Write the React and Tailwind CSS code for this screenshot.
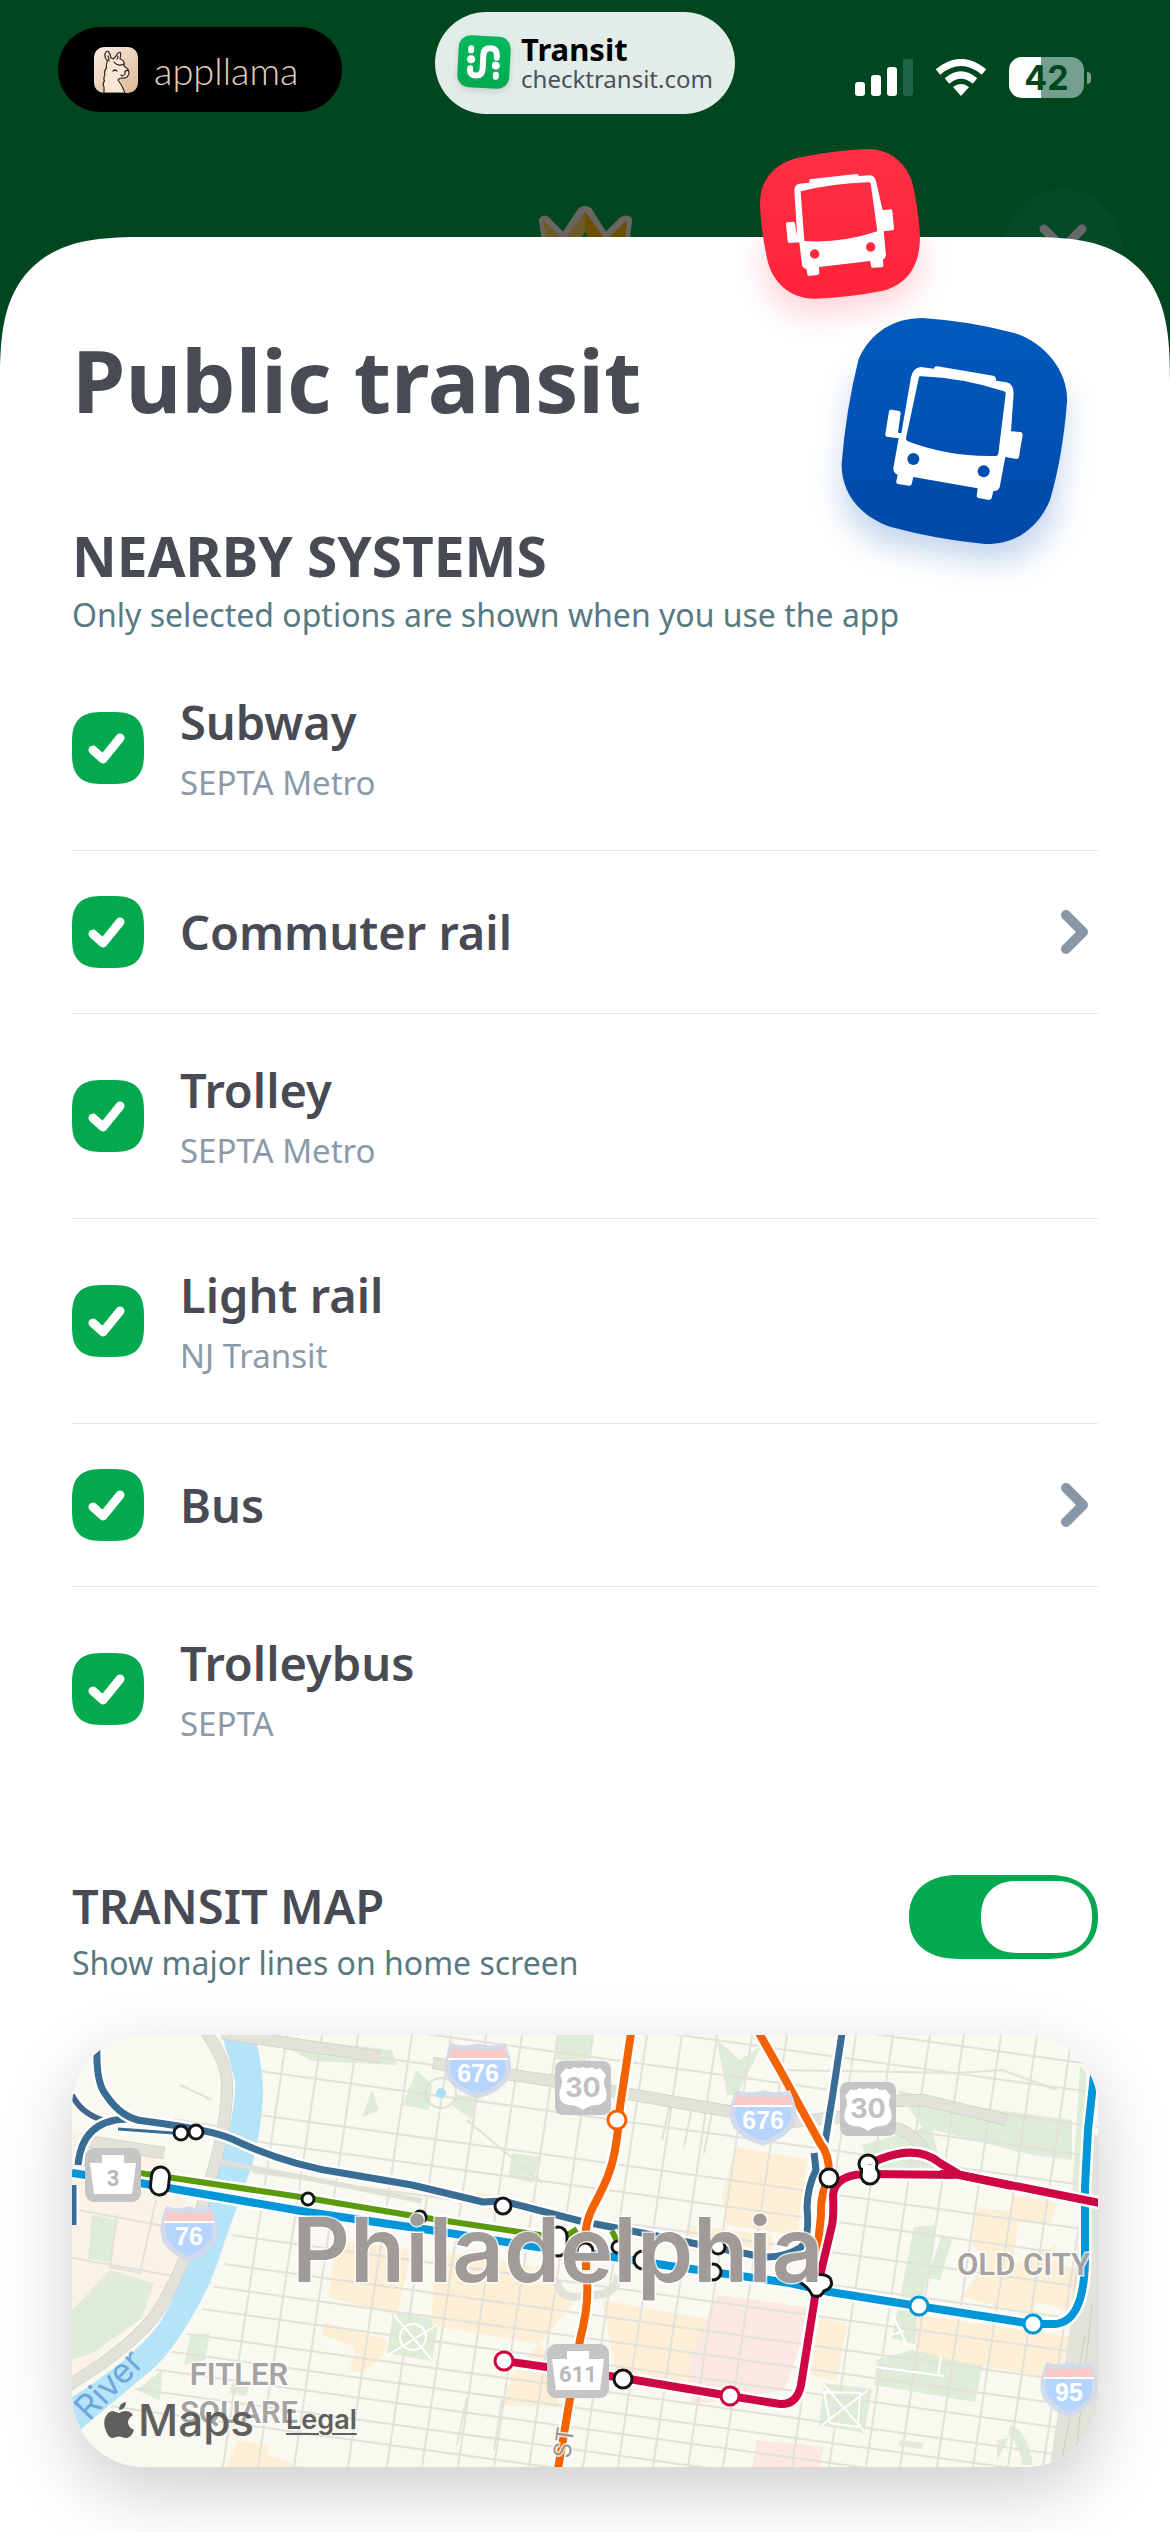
import React, { useState } from 'react';
import { clsx } from 'clsx';

const systems = [
  { id: 'subway', name: 'Subway', agency: 'SEPTA Metro' },
  { id: 'commuter', name: 'Commuter rail', more: true },
  { id: 'trolley', name: 'Trolley', agency: 'SEPTA Metro' },
  { id: 'light', name: 'Light rail', agency: 'NJ Transit' },
  { id: 'bus', name: 'Bus', more: true },
  { id: 'trolleybus', name: 'Trolleybus', agency: 'SEPTA' },
];

const LlamaLogo = () => (
  <svg viewBox="0 0 44 46" className="w-11 h-[46px]" aria-hidden="true">
    <defs>
      <linearGradient id="llama" x1="0" y1="0" x2="1" y2="1">
        <stop offset="0" stopColor="#fdeee0" />
        <stop offset="1" stopColor="#dcb898" />
      </linearGradient>
    </defs>
    <rect width="44" height="46" rx="10" fill="url(#llama)" />
    <path
      d="M10 46 V40 Q8 37 10.500 34 Q9 31 11 28 Q9.500 24 12.500 21 Q12 17 13.500 14 Q9 9 12 5 Q15 2 17 11 L19 12 Q22 10 24 6 Q28 3 26 12 Q31 13 30 19 Q35 22 35 26 Q34 32 28 31 Q25 31 24 33 Q28 38 31 46 Z"
      fill="#fbe6d3"
      stroke="#2b2623"
      strokeWidth="1.200"
      strokeLinejoin="round"
    />
    <path d="M20 15 Q24 20 30 17 M19 24 q2 -2 4 0 M31 24 q2 0 3 -1 M31 24 v3 q-2 3 -4 1 M14 9 q1 2 1 5 M24 9 q0 2 -1 3" fill="none" stroke="#2b2623" strokeWidth="1.200" strokeLinecap="round" />
  </svg>
);

const TransitLogo = () => (
  <svg viewBox="0 0 54 56" className="w-[54px] h-14 overflow-visible drop-shadow-md" aria-hidden="true">
    <defs>
      <linearGradient id="tlogo" x1="0" y1="0" x2="0" y2="1">
        <stop offset="0" stopColor="#05b85e" />
        <stop offset="1" stopColor="#02a94f" />
      </linearGradient>
    </defs>
    <g transform="rotate(3 27 27)">
      <rect x="1" y="1" width="52" height="52" rx="12" fill="url(#tlogo)" />
      <g fill="none" stroke="#fff" strokeWidth="6" strokeLinecap="round">
        <path d="M13.500 34 V36 Q14 41 19.500 41 Q26 41 26 34 V20 Q26 13 33 13 Q39.500 13 39.500 20 V22" />
        <path d="M13.500 14 V16 M39.500 39 V41" />
      </g>
      <circle cx="14" cy="25" r="4" fill="#fff" />
      <circle cx="39" cy="30" r="4" fill="#fff" />
    </g>
  </svg>
);

const StatusIcons = () => (
  <div className="flex items-center gap-[22px] justify-self-end mt-[57px] mr-[79px]">
    <svg viewBox="0 0 58 38" className="w-[58px] h-[38px]" aria-hidden="true">
      <g fill="#fff">
        <rect x="0" y="23" width="10" height="14" rx="3" />
        <rect x="16" y="16" width="10" height="21" rx="3" />
        <rect x="32" y="8" width="10" height="29" rx="3" />
      </g>
      <rect x="48" y="0" width="10" height="37" rx="3" fill="#1f6648" />
    </svg>
    <svg viewBox="0 0 52 38" className="w-[52px] h-[38px]" aria-hidden="true">
      <g fill="none" stroke="#fff" strokeWidth="7">
        <path d="M3 13 Q26 -6 49 13" />
        <path d="M12 22 Q26 10 40 22" />
      </g>
      <path d="M18 28 Q26 22 34 28 L26 37 Z" fill="#fff" />
    </svg>
    <div className="flex items-center gap-[3px]">
      <div className="flex items-center justify-center w-[75px] h-[41px] rounded-[13px] bg-linear-to-r from-white from-43% to-[#73a08e] to-43% text-[#00461f] text-[34px] leading-none font-bold font-['Inter',sans-serif]">
        42
      </div>
      <div className="w-1 h-3 rounded-r-full bg-[#73a08e]" />
    </div>
  </div>
);

const BusBadges = () => (
  <svg viewBox="0 0 1410 1350" className="absolute right-0 -top-[107px] w-[470px] h-[450px] overflow-visible pointer-events-none" aria-hidden="true">
    <defs>
      <linearGradient id="redBadge" x1="0" y1="0" x2="0" y2="1">
        <stop offset="0" stopColor="#ff2f46" />
        <stop offset="1" stopColor="#ff2439" />
      </linearGradient>
      <linearGradient id="blueBadge" x1="0" y1="0" x2="0" y2="1">
        <stop offset="0" stopColor="#005bbd" />
        <stop offset="1" stopColor="#0048a8" />
      </linearGradient>
      <filter id="soft" x="-50%" y="-50%" width="200%" height="200%">
        <feGaussianBlur stdDeviation="50" />
      </filter>
    </defs>

    <path d="M190 340 L640 320 L665 400 Q640 520 500 530 L340 550 Q210 540 200 420 Z" fill="#ff2f46" opacity="0.22" filter="url(#soft)" />
    <path d="M470 740 L1100 800 L1060 1170 Q1000 1300 850 1290 L560 1240 Q420 1190 430 1050 Z" fill="#0050b4" opacity="0.25" filter="url(#soft)" />

    <path
      d="M310 80 Q410 61 500 57 C585 57 628 115 640 170 Q656 245 660 320 C660 420 610 468 545 483 Q445 503 345 506 C265 506 212 450 200 380 Q181 290 180 215 C182 140 235 92 310 80 Z"
      fill="url(#redBadge)"
    />
    <path
      d="M328 151 Q329 147 334 147 L470 132 Q476 132 477 138 L510 136 Q524 137 528 154 L548 241 L572 238 Q576 238 577 243 L582 295 Q582 301 577 301 L551 304 L558 375 Q556 387 549 388 L550 408 Q549 412 544 412 L518 413 Q513 413 513 409 L511 393 L357 411 L358 430 Q357 435 352 435 L326 438 Q322 437 322 433 L319 416 Q308 415 306 404 L298 337 L268 339 Q264 339 263 334 L258 281 Q258 277 262 277 L279 275 Q284 275 285 280 L292 322 L283 182 Q283 164 298 161 L328 158 Z M302 186 L313 333 Q425 340 532 304 L512 160 Q510 156 505 157 Q400 160 302 184 Z"
      fill="#fff"
      fillRule="evenodd"
    />
    <circle cx="344" cy="372" r="14" fill="#ff2a3f" />
    <circle cx="512" cy="351" r="14" fill="#ff2a3f" />

    <path
      d="M667 564 Q800 572 940 608 C1035 636 1105 725 1101 815 Q1088 980 1050 1110 C1010 1205 935 1244 855 1242 Q710 1228 570 1190 C470 1155 423 1080 425 1000 Q438 840 475 690 C510 605 585 564 667 564 Z"
      fill="url(#blueBadge)"
    />
    <path
      d="M701 716 Q703 708 712 709 L880 737 Q887 739 888 746 L888 752 L920 757 Q940 762 941 790 L933 904 L962 906 Q968 908 968 914 L957 981 Q955 988 949 987 L916 981 L899 1072 Q895 1084 880 1083 L875 1104 Q873 1110 867 1110 L835 1104 Q829 1102 830 1097 L833 1075 L640 1041 L635 1062 Q633 1068 627 1067 L594 1062 Q588 1060 589 1054 L593 1034 Q580 1030 580 1015 L596 925 L560 920 Q555 918 556 912 L567 844 Q569 838 575 839 L597 843 Q602 844 602 850 L594 908 L604 910 L633 742 Q638 714 662 711 Z M657 741 L618 925 Q617 930 623 934 Q750 982 888 978 Q894 977 895 971 L917 792 Q918 787 912 784 Q790 744 664 739 Q658 738 657 741 Z"
      fill="#fff"
      fillRule="evenodd"
    />
    <circle cx="640" cy="987" r="18" fill="#004fb0" />
    <circle cx="851" cy="1024" r="18" fill="#004fb0" />
  </svg>
);

const SystemRow = ({ system, checked, onToggle, last }) => (
  <li className={clsx('flex items-center justify-between py-[45px]', !last && 'border-b border-[#e3e7ea]')}>
    <label className="flex items-center gap-9">
      <span className="relative flex w-18 h-18">
        <input
          type="checkbox"
          checked={checked}
          onChange={onToggle}
          className="appearance-none w-18 h-18 rounded-[24px] supports-[corner-shape:squircle]:rounded-[32px] [corner-shape:superellipse(1.5)] bg-[#d5dde2] checked:bg-[#02a94f]"
        />
        {checked && (
          <svg viewBox="0 0 72 72" className="absolute inset-0 pointer-events-none" aria-hidden="true">
            <path d="M21 38 L31 47 L48 26" fill="none" stroke="#fff" strokeWidth="9" strokeLinecap="round" strokeLinejoin="round" />
          </svg>
        )}
      </span>
      <span className="flex flex-col gap-2">
        <span className="text-[47px] leading-[62px] font-semibold text-[#484b54]">{system.name}</span>
        {system.agency && <span className="text-[33px] leading-[44px] text-[#8a9aa9]">{system.agency}</span>}
      </span>
    </label>
    {system.more && (
      <button type="button" aria-label={`${system.name} options`} className="mr-2">
        <svg viewBox="0 0 32 48" className="w-8 h-12" aria-hidden="true">
          <path d="M8 7 L25 24 L8 41" fill="none" stroke="#8797a8" strokeWidth="10" strokeLinecap="round" strokeLinejoin="round" />
        </svg>
      </button>
    )}
  </li>
);

// Street grid: avenues are given by x at the top edge, cross streets by y at the left edge
const avenues = [215, 250, 286, 340, 379, 414, 450, 486, 521, 575, 610, 645, 680, 715, 784, 821, 858, 892, 929, 965, 1000, 1035];
const crossStreets = [-112, -84, -50, -20, 10, 54, 81, 112, 145, 178, 208, 232, 256, 283, 303, 323, 345, 366];

const Interstate = ({ x, y, w = 52, label }) => (
  <g transform={`translate(${x} ${y})`}>
    <path
      d={`M${-w / 2 + 5} -25 Q${-w / 4} -21 0 -25 Q${w / 4} -21 ${w / 2 - 5} -25 Q${w / 2 + 4} -5 ${w / 2 - 3} 8 Q${w / 2 - 12} 20 0 25 Q${-w / 2 + 12} 20 ${-w / 2 + 3} 8 Q${-w / 2 - 4} -5 ${-w / 2 + 5} -25 Z`}
      fill="#b5d5ff"
      stroke="#d3daea"
      strokeWidth="5"
    />
    <path d={`M${-w / 2 + 5} -23 Q${-w / 4} -19 0 -22 Q${w / 4} -19 ${w / 2 - 5} -23 L${w / 2 - 1} -13 H${-w / 2 + 1} Z`} fill="#fac9c8" />
    <path d={`M${-w / 2 + 1} -12 H${w / 2 - 1}`} stroke="#fff" strokeWidth="2" />
    <text y="11" textAnchor="middle" fill="#fff" className="text-[25px] font-bold font-['Liberation_Sans',sans-serif]">{label}</text>
  </g>
);

const UsRoute = ({ x, y, label }) => (
  <g transform={`translate(${x} ${y})`}>
    <rect width="56" height="54" rx="8" fill="#c5c5c5" />
    <path d="M11 7 Q15 10 19 6 Q24 8 28 6 Q32 8 37 6 Q41 10 45 7 L51 14 Q47 20 51 29 Q54 41 43 44 Q34 44 28 49 Q22 44 13 44 Q2 41 5 29 Q9 20 5 14 Z" fill="#fff" />
    <text x="28" y="36" textAnchor="middle" fill="#c0c0c0" className="text-[27px] font-bold font-['Inter',sans-serif]">{label}</text>
  </g>
);

const Keystone = ({ x, y, w = 56, label }) => (
  <g transform={`translate(${x} ${y})`}>
    <rect width={w} height="54" rx="9" fill="#c5c5c5" />
    <path d={`M${w / 2 - 11} 7 H${w / 2 + 11} V15 H${w - 5} L${w - 9} 46 H9 L5 15 H${w / 2 - 11} Z`} fill="#fff" />
    <text x={w / 2} y="38" textAnchor="middle" fill="#b8b8b8" className="text-[22px] font-bold font-['Roboto',sans-serif]">{label}</text>
  </g>
);

const Line = ({ d, color, width = 7 }) => (
  <g fill="none" strokeLinecap="butt" strokeLinejoin="round">
    <path d={d} stroke="#fff" strokeWidth={width + 5} />
    <path d={d} stroke={color} strokeWidth={width} />
  </g>
);

const Stop = ({ x, y, r = 8, color = '#151515' }) => (
  <circle cx={x} cy={y} r={r} fill="#fff" stroke={color} strokeWidth="3" />
);

const TransitMap = () => (
  <svg viewBox="0 0 1026 432" preserveAspectRatio="xMidYMid slice" className="block w-full h-[432px]" role="img" aria-label="Map of Philadelphia transit lines">
    <defs>
      <clipPath id="eastBank">
        <path d="M192 0 H1026 V432 H0 V400 L75 345 L122 290 L150 235 L185 120 Z" />
      </clipPath>
    </defs>
    <rect width="1026" height="432" fill="#f9f8f1" />

    {/* land use */}
    <path d="M0 95 L70 110 L115 150 L110 225 L85 270 L40 310 L0 345 Z" fill="#fbf2e6" />
    <g fill="#dfecd8">
      <path d="M20 180 L46 185 L38 227 L16 224 Z M38 235 L82 248 L70 283 L20 318 L0 325 V275 Z" />
      <path d="M190 0 L320 15 L325 30 L240 26 Z M345 35 L360 50 L357 75 L330 70 Z M300 55 L307 75 L290 82 Z" />
      <path d="M485 0 H521 L514 30 L484 24 Z M440 118 L468 122 L461 148 L436 142 Z M385 60 L405 62 L400 85 L380 70 Z" />
      <path d="M645 5 L668 25 L690 10 L665 60 L655 60 Z M825 55 L890 70 L1000 85 L1000 125 L960 120 L850 92 Z M790 110 L860 90 L870 140 L800 140 Z" />
      <path d="M842 192 L864 190 L843 309 L820 303 Z M870 200 L880 205 L868 245 L855 243 Z M1008 30 L1015 40 L1008 160 L1000 160 Z" />
      <path d="M840 315 L911 328 L903 367 L802 350 L805 325 Z M752 348 L800 354 L792 398 L747 390 Z M828 405 L852 408 L850 414 L827 411 Z" />
      <path d="M938 390 Q955 395 961 430 H950 Q948 410 936 400 Z M719 420 L735 418 L732 430 L718 428 Z M925 405 L937 403 L925 425 Z" />
      <path d="M321 277 L367 285 L360 326 L315 318 Z M118 300 L138 298 L133 325 L112 330 Z M65 355 L90 335 L88 366 Z M160 348 L177 352 L174 361 L157 358 Z" />
    </g>
    <g fill="#fdefd6">
      <path d="M265 205 L340 215 L325 280 L256 262 Z M252 287 L315 305 L312 320 L290 338 L278 336 L283 312 L250 300 Z" />
      <path d="M362 215 L480 235 L500 270 L440 340 L430 370 L488 372 L470 310 L360 290 Z M404 157 L427 160 L422 175 L402 172 Z" />
      <path d="M530 265 L640 285 L620 355 L545 343 Z M664 112 L735 124 L725 200 L655 190 L650 160 Z M615 190 L700 200 V225 L610 215 Z" />
      <path d="M165 405 L196 410 L195 420 L230 432 H155 Z M905 172 L948 178 L940 230 L985 210 L960 280 L890 262 L915 225 L900 210 Z" />
      <path d="M940 160 L985 168 L978 190 L935 185 Z M748 283 L775 288 L765 345 L738 340 Z M845 280 L1000 302 L985 345 L880 325 L843 315 Z M958 215 L1005 235 L1000 275 L955 265 Z" />
    </g>
    <path d="M645 260 L735 272 L725 320 L712 355 L620 370 L618 320 Z M685 405 L752 412 L747 432 H680 Z" fill="#fbe8e2" />

    {/* streets */}
    <g clipPath="url(#eastBank)" stroke="#e2e1da" strokeWidth="2">
      {avenues.map((x) => (
        <path key={x} d={`M${x} 0 L${x - 64} 432`} />
      ))}
      {crossStreets.map((y) => (
        <path key={y} d={`M0 ${y} L1026 ${y + 142}`} />
      ))}
    </g>
    <g fill="none" stroke="#e2e1da" strokeWidth="2">
      <path d="M0 174 L130 198 M0 223 L140 248 M84 165 L68 238 L38 232 L45 180 M102 84 L150 92 M108 50 L140 65" />
      <path d="M395 85 L470 148 M708 35 L885 38 L930 35 L985 55 M600 60 L590 105 M620 72 L612 112 M640 78 L632 118 M395 362 L385 410 M430 365 L422 415" />
    </g>

    {/* river and highways */}
    <path
      d="M150 0 H183 Q192 40 191 62 Q188 110 175 145 L153 205 Q140 250 118 285 Q95 325 71 342 L8 395 Q0 380 0 362 Q60 325 88 288 Q110 250 118 210 L135 165 L155 105 Q165 60 163 45 Z"
      fill="#b5e4f8"
    />
    <g fill="none" stroke="#c9c9bd" strokeWidth="12">
      <path d="M134 -3 Q154 25 155 48 Q156 95 131 168 Q115 230 85 278 Q60 312 -3 350" />
      <path d="M150 -2 L308 22 M361 28 L481 46 L661 77 M708 88 L768 82 L821 66 L851 65 L935 85 M821 92 Q850 100 857 130 M14 106 L92 118" />
    </g>
    <g fill="none" stroke="#e2e1da" strokeWidth="11">
      <path d="M134 -3 Q154 25 155 48 Q156 95 131 168 Q115 230 85 278 Q60 312 -3 350" />
      <path d="M150 -2 L308 22 M361 28 L481 46 L661 77 M708 88 L768 82 L821 66 L851 65 L935 85 M821 92 Q850 100 857 130 M14 106 L92 118" />
    </g>
    <path d="M1016 100 H1026 V432 H978 L998 292 Z" fill="#e2e1da" />
    <path d="M1013 300 L990 425 M1020 270 L1004 420" stroke="#cecdc2" strokeWidth="1" />
    <path d="M148 127 L230 142 L350 166" fill="none" stroke="#e0dfd8" strokeWidth="5" />

    {/* paths in the squares */}
    <g fill="none" stroke="#fff" strokeWidth="2">
      <path d="M322 280 L360 325 M365 290 L316 320" />
      <circle cx="341" cy="302" r="13" />
      <path d="M752 357 L788 358 L786 392 L758 388 Z M752 350 L792 396 M796 355 L750 390 M804 332 L872 341 M869 322 L866 340 M822 283 L836 312 M820 300 L832 296" />
    </g>
    <path d="M484 245 Q490 268 514 260 Q545 262 546 240" fill="none" stroke="#e2e1da" strokeWidth="8" />
    <circle cx="369" cy="58" r="15" fill="none" stroke="#e0dfd8" strokeWidth="2" />
    <circle cx="369" cy="58" r="5" fill="#a9dff7" />

    {/* lines */}
    <Line color="#3a6d93" d="M46 94 L101 98" width={3} />
    <Line color="#43658e" d="M0 60 Q10 80 34 86" width={6} />
    <Line color="#3a6d93" d="M2 150 V190" width={5} />
    <Line color="#3a6d93" d="M6 130 Q10 85 55 84" />
    <Line color="#3a6d93" d="M25 14 Q24 48 34 60 Q50 84 72 86 Q140 95 160 104 Q215 130 270 138 L340 150 L411 167 L431 166 L508 186 L565 197 L625 209 L681 220 Q705 226 728 213 Q738 205 735 172 Q736 150 744 135 L742 118" />
    <Line color="#3a6d93" d="M770 -2 L761 58 L753 108" />
    <Line color="#5a9a0c" d="M13 128 L68 138 L235 163 L348 182 L468 200 L491 203 L505 194 M540 196 L546 208" width={6} />
    <Line color="#0096d8" d="M0 138 L68 148 L235 177 L358 195 L465 212 L535 221 L598 231 L718 248 L758 257 L846 271 L961 289 H980 Q1012 290 1013 225 V152 L1016 95 L1022 40" width={8} />
    <Line color="#f46200" d="M559 -2 L548 72 Q545 115 538 135 Q534 148 521 172 Q512 190 514 205 V235" width={8} />
    <Line color="#f46200" d="M515 246 Q517 270 508 305 L486 434" width={8} />
    <Line color="#f46200" d="M687 -2 L708 35 L748 108 Q758 120 757 142 Q748 160 749 180 L742 250" width={8} />
    <Line color="#ce0642" d="M432 326 L551 343 L658 361 L708 369 Q725 370 729 350 L743 262 L760 190 Q762 180 761 160 Q763 139 796 139 L888 140 L1028 168" width={8} />
    <Line color="#ce0642" d="M790 133 Q840 105 868 128 L888 140" width={8} />
    <path d="M868 139 L888 140 L940 151" fill="none" stroke="#ce0642" strokeWidth="8" />

    <Stop x={109} y={98} r={7} />
    <Stop x={124} y={97} r={7} />
    <Stop x={236} y={164} r={6} />
    <Stop x={348} y={182} r={6} />
    <Stop x={431} y={171} />
    <rect x="79" y="132" width="18" height="28" rx="9" fill="#fff" stroke="#151515" strokeWidth="3" transform="rotate(6 88 146)" />
    <rect x="477" y="192" width="18" height="29" rx="9" fill="#fff" stroke="#151515" strokeWidth="3" />
    <Stop x={513} y={216} r={8} />
    <Stop x={546} y={212} r={6} />
    <Stop x={571} y={225} r={9} />
    <Stop x={646} y={212} r={7} />
    <Stop x={641} y={237} />
    <Stop x={757} y={143} r={9} />
    <Stop x={796} y={129} r={9} />
    <Stop x={798} y={140} r={9} />
    <rect x="791" y="130" width="12" height="8" fill="#fff" />
    <path d="M729 248 Q727 240 738 241 Q752 237 758 243 Q763 252 752 256 Q748 264 740 260 Q737 253 729 248 Z" fill="#fff" stroke="#151515" strokeWidth="3" />
    <Stop x={551} y={344} r={9} />
    <Stop x={545} y={85} r={9} color="#f46200" />
    <Stop x={432} y={326} r={9} color="#ce0642" />
    <Stop x={658} y={361} r={9} color="#ce0642" />
    <Stop x={847} y={271} r={9} color="#0096d8" />
    <Stop x={961} y={289} r={9} color="#0096d8" />

    <Interstate x={117} y={199} label="76" />
    <Interstate x={406} y={36} w={61} label="676" />
    <Interstate x={691} y={83} w={61} label="676" />
    <Interstate x={997} y={355} label="95" />
    <UsRoute x={483} y={26} label="30" />
    <UsRoute x={768} y={47} label="30" />
    <Keystone x={13} y={113} label="3" />
    <Keystone x={475} y={309} w={62} label="611" />

    {/* place names */}
    <g fill="#a6a4a0" stroke="#ffffff" strokeOpacity="0.800" strokeWidth="3" style={{ paintOrder: 'stroke' }}>
      <text x="220" y="247" fill="#a09b96" className="text-[90px] font-semibold font-['Inter',sans-serif]">Philadelphia</text>
      <g className="text-[31px] font-semibold font-['Roboto',sans-serif]">
        <text x="885" y="240">OLD CITY</text>
        <text x="167" y="350" textAnchor="middle">FITLER</text>
        <text x="167" y="388" textAnchor="middle">SQUARE</text>
      </g>
      <text transform="translate(498 424) rotate(-82)" fill="#98958f" className="text-[24px] font-['Inter',sans-serif]">ST</text>
    </g>
    <text transform="translate(17 387) rotate(-46)" fill="#6fa6dc" className="text-[34px] font-['Inter',sans-serif]">River</text>
  </svg>
);

const App = () => {
  const [selected, setSelected] = useState(() => new Set(systems.map((s) => s.id)));
  const [showMap, setShowMap] = useState(true);

  const toggle = (id) => {
    const next = new Set(selected);
    if (next.has(id)) next.delete(id);
    else next.add(id);
    setSelected(next);
  };

  return (
    <div className="relative min-h-screen flex flex-col bg-[#00461f] font-['Noto_Sans',sans-serif] overflow-hidden">
      {/* Dimmed screen behind the sheet */}
      <button type="button" aria-label="Close" className="absolute right-12 top-[189px] w-[118px] h-[118px] rounded-full bg-[#024a28] flex items-start justify-center pt-[35px]">
        <svg viewBox="0 0 48 48" className="w-12 h-12" aria-hidden="true">
          <path d="M5 5 L43 43 M43 5 L5 43" stroke="#686868" strokeWidth="9" strokeLinecap="round" />
        </svg>
      </button>
      <svg viewBox="0 0 92 60" className="absolute left-1/2 -translate-x-1/2 top-[204px] w-[102px] h-[66px]" aria-hidden="true">
        <path d="M4 14 Q8 8 13 12 L26 25 L40 4 Q46 -1 52 4 L65 25 L78 12 Q86 8 89 14 L84 56 H10 Z" fill="#6b6561" />
        <path d="M8 15 L27 33 L46 7 V56 H14 Z" fill="#6d5a2b" />
        <path d="M46 7 L65 33 L84 15 L80 56 H46 Z" fill="#6b4f02" />
        <path d="M42 32 L46 25 L50 32 Z" fill="#06512a" />
      </svg>

      <header className="grid grid-cols-[1fr_auto_1fr] items-start h-[237px]">
        <div className="flex items-center gap-4 w-[284px] h-[85px] mt-[27px] ml-[58px] pl-9 rounded-[42px] bg-black">
          <LlamaLogo />
          <span className="text-[38px] leading-10 font-light text-[#e3cfbd] font-['Lato',sans-serif]">appllama</span>
        </div>
        <div className="flex items-center gap-2.5 h-[102px] mt-3 pl-[22px] pr-[22px] rounded-[51px] bg-[#e2ece8]">
          <TransitLogo />
          <div className="flex flex-col">
            <span className="text-[31px] leading-8 font-bold text-black">Transit</span>
            <span className="text-[24px] leading-7 text-[#4d5059]">checktransit.com</span>
          </div>
        </div>
        <StatusIcons />
      </header>

      <main className="relative flex-1 px-18 pt-[95px] pb-15 rounded-t-[112px] supports-[corner-shape:squircle]:rounded-t-[144px] [corner-shape:superellipse(1.5)] bg-white">
        <BusBadges />

        <h1 className="text-[86px] leading-[96px] font-bold text-[#484b54]">Public transit</h1>

        <section>
          <h2 className="mt-24 text-[55px] leading-[64px] font-bold text-[#484b54]">NEARBY SYSTEMS</h2>
          <p className="mt-1 text-[32px] leading-[46px] text-[#577a82]">Only selected options are shown when you use the app</p>
          <ul className="mt-2">
            {systems.map((system, idx) => (
              <SystemRow
                key={system.id}
                system={system}
                checked={selected.has(system.id)}
                onToggle={() => toggle(system.id)}
                last={idx === systems.length - 1}
              />
            ))}
          </ul>
        </section>

        <section>
          <label className="flex items-start justify-between mt-[84px]">
            <span className="flex flex-col gap-1">
              <span className="text-[47px] leading-[62px] font-semibold text-[#484b54]">TRANSIT MAP</span>
              <span className="text-[32px] leading-[44px] text-[#577a82]">Show major lines on home screen</span>
            </span>
            <input
              type="checkbox"
              role="switch"
              checked={showMap}
              onChange={() => setShowMap(!showMap)}
              className="appearance-none flex items-center w-[189px] h-21 px-1.5 rounded-[42px] supports-[corner-shape:squircle]:rounded-[50px/42px] [corner-shape:superellipse(1.2)] bg-[#c9d1d6] checked:bg-[#02a94f] checked:justify-end before:content-[''] before:w-[111px] before:h-18 before:rounded-[36px] before:[corner-shape:superellipse(1.2)] before:bg-white"
            />
          </label>

          <div className="relative mt-[50px] rounded-[72px] overflow-hidden shadow-[0_24px_72px_rgba(0,0,0,0.2)]">
            <TransitMap />
            <div className="absolute left-8 bottom-5 flex items-center text-[#5f5f5d] font-['Inter',sans-serif]">
              <svg viewBox="0 0 30 36" className="w-[30px] h-9" aria-hidden="true">
                <path
                  d="M15 11 Q18 9 22 9 Q26 9 29 13 Q24 16 24 21 Q25 26 30 28 Q27 36 22 36 Q20 36 18 35 Q15 34 12 35 Q10 36 8 36 Q4 35 2 29 Q-1 22 1 16 Q4 9 9 9 Q12 10 15 11 Z M15 8 Q15 1 22 0 Q22 7 15 8 Z"
                  fill="#5f5f5d"
                />
              </svg>
              <span className="ml-1 text-[44px] leading-[54px] font-medium">Maps</span>
              <a href="#legal" className="ml-8 text-[27px] leading-[54px] font-semibold underline decoration-2 underline-offset-4">Legal</a>
            </div>
          </div>
        </section>
      </main>
    </div>
  );
};

export default App;
